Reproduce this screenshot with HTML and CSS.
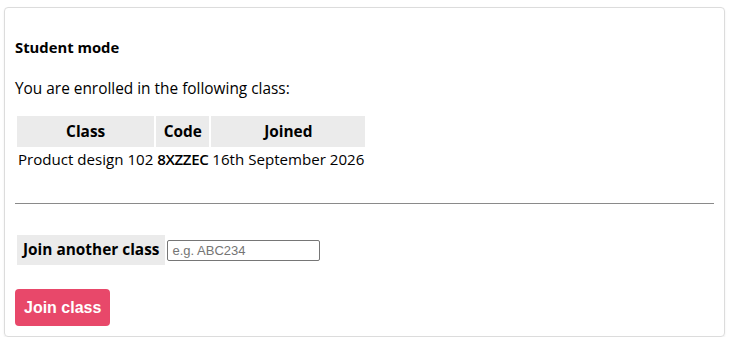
FILE: index.html
```html
<!DOCTYPE html>
<html lang="en">
<head>
    <meta charset="UTF-8">
    <meta name="viewport" content="width=device-width, initial-scale=1.0">
    <title>Student mode</title>
    <link rel="stylesheet" href="styles.css">
</head>
<body>
    <div class="card">
        <h4>Student mode</h4>
        <p>You are enrolled in the following class:</p>
        <table class="classes">
            <tr>
                <th>Class</th>
                <th>Code</th>
                <th>Joined</th>
            </tr>
            <tr>
                <td>Product design 102</td>
                <td class="code">8XZZEC</td>
                <td>16th September 2026</td>
            </tr>
        </table>
        <hr>
        <form class="join-form">
            <table class="join">
                <tr>
                    <th><label for="codigo">Join another class</label></th>
                    <td><input type="text" id="codigo" name="codigo" placeholder="e.g. ABC234"></td>
                </tr>
            </table>
            <button type="submit">Join class</button>
        </form>
    </div>
</body>
</html>
```

FILE: styles.css
```css
body {
    margin: 0;
    padding: 7px 10px 0 4px;
    font-family: "Open Sans", Arial, sans-serif;
    font-size: 15.4px;
    line-height: 20px;
    color: #000;
    background: #fff;
}
.card {
    height: 330px;
    box-sizing: border-box;
    border: 1px solid #dcdcdc;
    border-radius: 4px;
    box-shadow: 0 1px 2px rgba(0, 0, 0, 0.08);
    padding: 29px 10px 0 10px;
}
h4 {
    margin: 0 0 22px 0;
    font-size: 14.8px;
    font-weight: 700;
}
p {
    margin: 0 0 15px 0;
}
table {
    border-spacing: 2px;
}
th {
    background-color: #ebebeb;
    font-weight: 700;
    padding: 5px 4px;
}
.classes th {
    padding: 6px 4px 5px 4px;
}
.classes td {
    padding: 0 1px;
    font-size: 15.1px;
}
.code {
    font-weight: 600;
    letter-spacing: -0.4px;
}
hr {
    margin: 32px 0 29px 0;
    border: none;
    border-top: 1px solid #8a8a8a;
}
.join th {
    padding: 5px 6px;
}
.join td {
    padding: 0;
}
input {
    box-sizing: border-box;
    width: 153px;
    height: 21px;
    padding: 1px 4px;
    border: 1px solid #767676;
    border-radius: 2px;
    font-family: Arial, sans-serif;
    font-size: 13px;
    vertical-align: middle;
}
button {
    margin-top: 22px;
    padding: 9px 9px;
    line-height: 19px;
    background-color: #e8486a;
    color: white;
    border: none;
    border-radius: 4px;
    font-family: Arial, sans-serif;
    font-weight: 700;
    font-size: 16px;
    cursor: pointer;
}
```
